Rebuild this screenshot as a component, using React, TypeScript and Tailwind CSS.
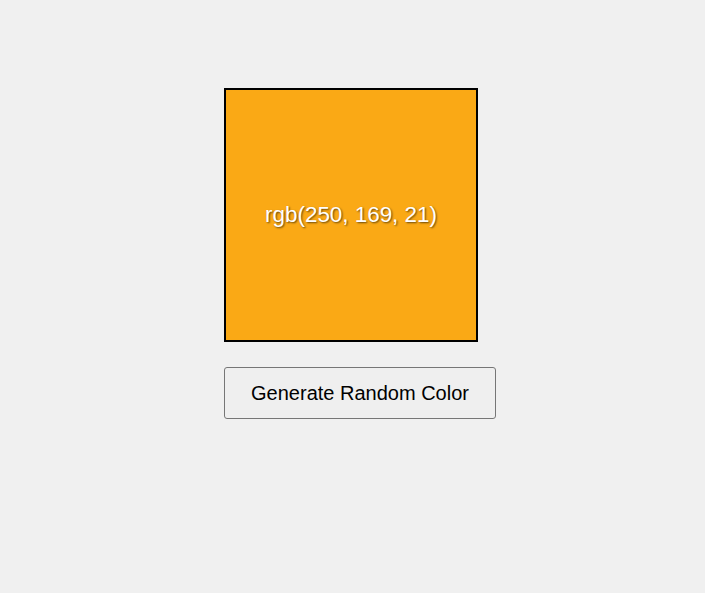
export default function App() {
  return (
    <div className="min-h-screen bg-[#f0f0f0] font-['Liberation_Sans',Arial,sans-serif]">
      <div className="flex flex-col items-start pl-[224px] pt-[88px]">
        <div className="flex h-[254px] w-[254px] items-center justify-center border-2 border-black bg-[#faa915]">
          <span className="text-[22.4px] text-white [text-shadow:1px_1px_2px_rgba(0,0,0,0.6)]">
            rgb(250, 169, 21)
          </span>
        </div>
        <button className="mt-[25px] flex h-[52px] w-[272px] items-center justify-center rounded-[3px] border border-[#767676] bg-[#efefef] text-[20px] text-black">
          Generate Random Color
        </button>
      </div>
    </div>
  );
}
